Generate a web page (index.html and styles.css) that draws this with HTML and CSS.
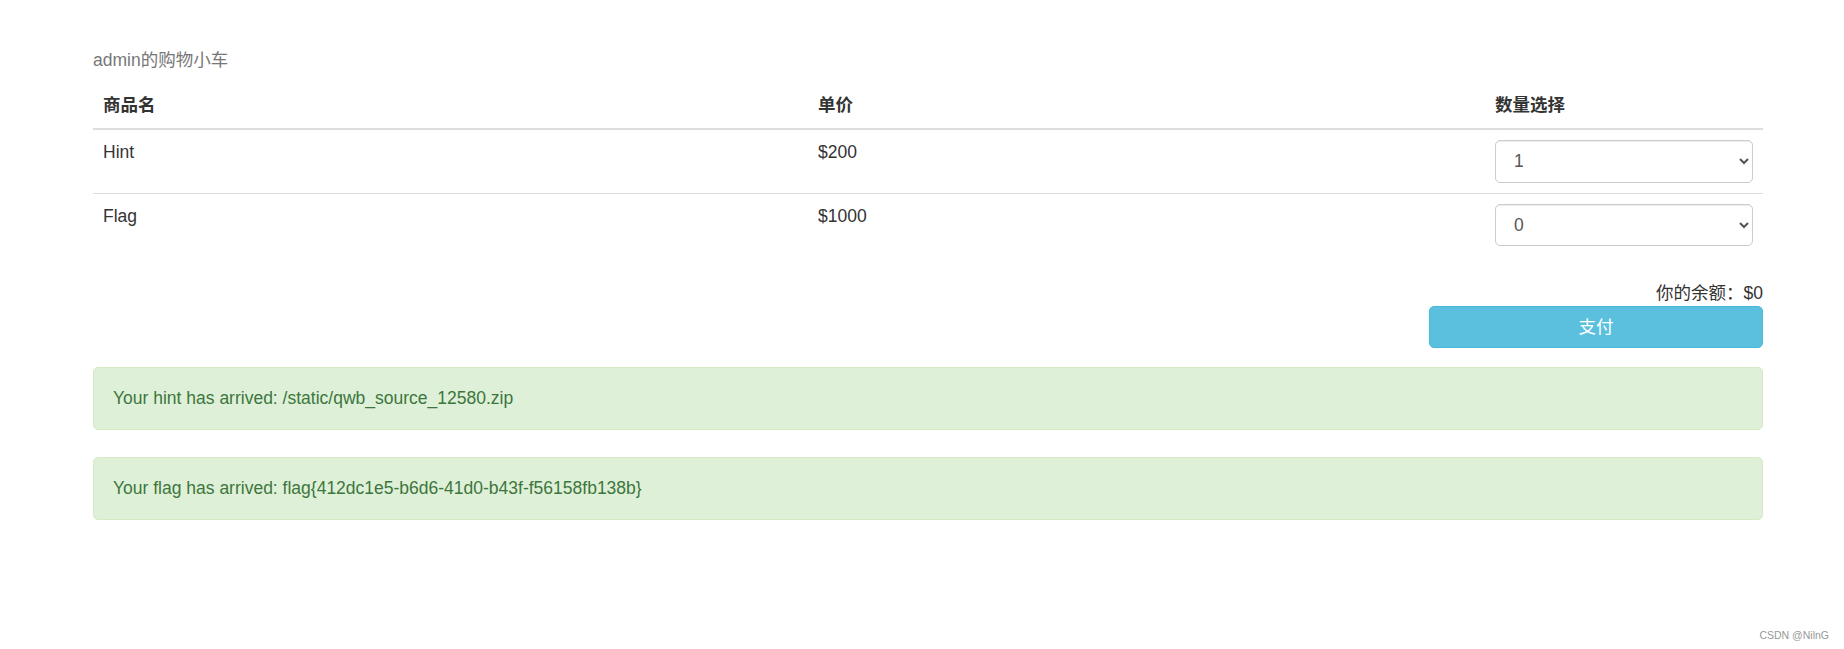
FILE: index.html
```html
<!DOCTYPE html>
<html lang="zh">
<head>
<meta charset="utf-8">
<title>购物车</title>
<link rel="stylesheet" href="styles.css">
</head>
<body>
<div class="page">
  <table class="cart">
    <caption>admin的购物小车</caption>
    <thead>
      <tr><th class="c-name">商品名</th><th class="c-price">单价</th><th class="c-qty">数量选择</th></tr>
    </thead>
    <tbody>
      <tr>
        <td>Hint</td><td>$200</td>
        <td><select class="qty"><option>1</option><option>0</option></select></td>
      </tr>
      <tr class="last">
        <td>Flag</td><td>$1000</td>
        <td><select class="qty"><option>0</option><option>1</option></select></td>
      </tr>
    </tbody>
  </table>
  <div class="balance">你的余额：$0</div>
  <div class="pay-row"><button class="pay">支付</button></div>
  <div class="alert">Your hint has arrived: /static/qwb_source_12580.zip</div>
  <div class="alert">Your flag has arrived: flag{412dc1e5-b6d6-41d0-b43f-f56158fb138b}</div>
</div>
<div class="watermark">CSDN @NilnG</div>
</body>
</html>
```
FILE: styles.css
```css
html, body {
  margin: 0;
  padding: 0;
  background: #fff;
}
body {
  font-family: "Liberation Sans", Arial, "Noto Sans CJK SC", sans-serif;
  font-size: 17.5px;
  line-height: 25px;
  color: #333;
}
.page {
  width: 1670px;
  padding: 38px 0 0 93px;
}
.cart {
  width: 1670px;
  border-collapse: collapse;
  border-spacing: 0;
  margin-bottom: 25px;
}
.cart caption {
  text-align: left;
  color: #777;
  padding: 10px 0;
}
.cart th {
  text-align: left;
  font-weight: bold;
  padding: 10px;
  border-bottom: 2px solid #ddd;
  vertical-align: bottom;
}
.c-name { width: 695px; }
.c-price { width: 657px; }
.c-qty { width: 258px; }
.cart td {
  padding: 10px;
  vertical-align: top;
  border-top: 1px solid #ddd;
}
.cart tbody tr:first-child td { border-top: 0; }
.qty {
  display: block;
  width: 100%;
  height: 42.5px;
  padding: 7.5px 14px;
  font-family: inherit;
  font-size: 17.5px;
  color: #555;
  background-color: #fff;
  border: 1px solid #ccc;
  border-radius: 5px;
  box-shadow: inset 0 1px 1px rgba(0,0,0,0.075);
}
.balance {
  text-align: right;
}
.pay-row {
  display: flex;
  justify-content: flex-end;
}
.pay {
  width: 334px;
  height: 42px;
  background: #5bc0de;
  border: 1px solid #46b8da;
  border-radius: 5px;
  color: #fff;
  font-family: inherit;
  font-size: 17.5px;
  line-height: 25px;
  padding: 7.5px 15px;
}
.alert {
  margin-top: 19px;
  margin-bottom: 27px;
  padding: 18px 19px;
  background: #dff0d8;
  border: 1px solid #d6e9c6;
  border-radius: 5px;
  color: #3c763d;
}
.watermark {
  position: absolute;
  right: 15px;
  top: 627px;
  font-size: 10.5px;
  line-height: 16px;
  color: #999;
}
```
